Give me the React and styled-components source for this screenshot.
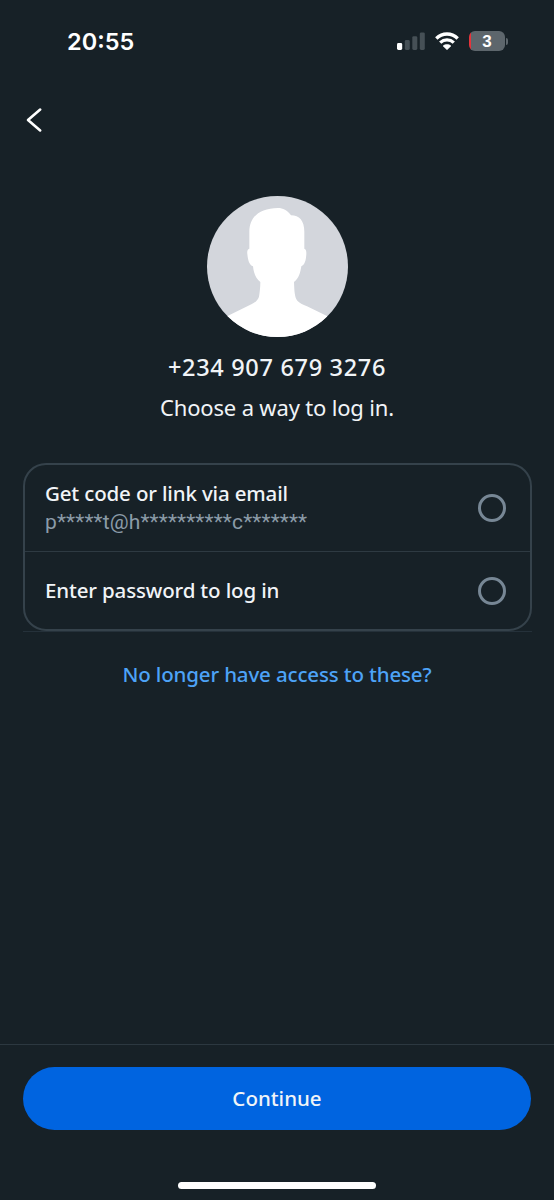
import React from 'react'
import styled, { createGlobalStyle } from 'styled-components'

const options = [
  { title: 'Get code or link via email', detail: 'p*****t@h**********c*******', height: 86 },
  { title: 'Enter password to log in', height: 78 },
]

export default function App() {
  return (
    <Screen>
      <GlobalStyle />
      <StatusBar>
        <Time>20:55</Time>
        <StatusIcons>
          <SignalIcon />
          <WifiIcon />
          <Battery>
            <BatteryBody>3</BatteryBody>
            <BatteryTip />
          </Battery>
        </StatusIcons>
      </StatusBar>
      <NavBar>
        <BackButton aria-label="Back">
          <svg width="18" height="26" viewBox="0 0 18 26" fill="none">
            <path d="M15.2 2.6 3 13l12.2 10.4" stroke="#fff" strokeWidth="2.6" strokeLinecap="round" strokeLinejoin="round" />
          </svg>
        </BackButton>
      </NavBar>
      <Profile>
        <Avatar />
        <Phone>+234 907 679 3276</Phone>
        <Prompt>Choose a way to log in.</Prompt>
      </Profile>
      <Options>
        <OptionCard>
          {options.map(option => (
            <Option key={ option.title } $height={ option.height }>
              <OptionText>
                <OptionTitle>{ option.title }</OptionTitle>
                {option.detail && <OptionDetail>{ option.detail }</OptionDetail>}
              </OptionText>
              <Radio />
            </Option>
          ))}
        </OptionCard>
      </Options>
      <HelpLink>No longer have access to these?</HelpLink>
      <Footer>
        <ContinueButton>Continue</ContinueButton>
        <HomeIndicator />
      </Footer>
    </Screen>
  )
}

const SignalIcon = () => (
  <svg width="28" height="18" viewBox="0 0 28 18">
    <rect x="0" y="11" width="5.2" height="7" rx="1.4" fill="#fff" />
    <rect x="7.8" y="8" width="5" height="10" rx="1.4" fill="#465056" />
    <rect x="15.3" y="4.2" width="5" height="13.8" rx="1.4" fill="#465056" />
    <rect x="22.8" y="0.4" width="5" height="17.6" rx="1.4" fill="#465056" />
  </svg>
)

const WifiIcon = () => (
  <svg width="24" height="18" viewBox="0 0 24 18">
    <path d="M1.3 6.4C7.4.6 16.6.6 22.7 6.4" fill="none" stroke="#fff" strokeWidth="3.4" />
    <path d="M5.2 10.6c3.9-3.6 9.7-3.6 13.6 0" fill="none" stroke="#fff" strokeWidth="3.3" />
    <path d="M12 17.8 8 13.9c2.3-1.9 5.7-1.9 8 0z" fill="#fff" stroke="#fff" strokeWidth="0.5" strokeLinejoin="round" />
  </svg>
)

const Avatar = () => (
  <AvatarCircle>
    <svg width="141" height="141" viewBox="0 0 423 423">
      <path
        fill="#fff"
        d="M127 158V108C127 62 158 37 213 36C228 36 241 42 252 58C277 58 292 74 292 108V158C298 160 298 166 298 174C297 194 293 206 283 211C280 230 276 247 261 258C262 286 263 304 271 314C277 321 287 325 300 331L360 360V423H60V361L127 328C143 321 151 315 156 302C158 290 160 274 160 258C147 247 140 232 138 211C127 207 123 194 121 174C120 166 121 160 127 158Z"
      />
    </svg>
  </AvatarCircle>
)

const GlobalStyle = createGlobalStyle`
  * {
    box-sizing: border-box;
  }

  body {
    margin: 0;
    background: #172127;
  }
`

const Screen = styled.div`
  display: flex;
  flex-direction: column;
  width: 554px;
  height: 1200px;
  overflow: hidden;
  background: #172127;
  color: #f1f4f7;
  font-family: 'Noto Sans', sans-serif;
`

const StatusBar = styled.div`
  display: flex;
  justify-content: space-between;
  align-items: center;
  height: 82px;
  padding: 0 46px 0 67px;
`

const Time = styled.span`
  padding-top: 2px;
  color: #fff;
  font-family: Inter, sans-serif;
  font-size: 23.5px;
  font-weight: 600;
  line-height: 30px;
`

const StatusIcons = styled.div`
  display: flex;
  align-items: center;
  gap: 10px;
`

const Battery = styled.div`
  display: flex;
  align-items: center;
  gap: 1px;
`

const BatteryBody = styled.div`
  width: 36px;
  height: 20px;
  border-radius: 6px;
  background: linear-gradient(to right, #e5343b 1.5px, #5d666c 2px);
  color: #fff;
  font-family: 'Liberation Sans', sans-serif;
  font-size: 17px;
  font-weight: 700;
  line-height: 21px;
  text-align: center;
`

const BatteryTip = styled.div`
  width: 2px;
  height: 7px;
  border-radius: 0 2px 2px 0;
  background: #5d666c;
`

const NavBar = styled.div`
  display: flex;
  align-items: center;
  height: 75px;
  padding: 0 25px;
`

const BackButton = styled.button`
  display: flex;
  padding: 0;
  border: 0;
  background: none;
`

const Profile = styled.div`
  display: flex;
  flex-direction: column;
  align-items: center;
  height: 306px;
  padding-top: 38.5px;
`

const AvatarCircle = styled.div`
  width: 141px;
  height: 141px;
  border-radius: 50%;
  background: #d3d6dc;
  overflow: hidden;
`

const Phone = styled.h1`
  margin: 14px 0 0;
  font-size: 23.5px;
  font-weight: 500;
  letter-spacing: 0.68px;
  line-height: 32px;
  white-space: nowrap;
`

const Prompt = styled.p`
  margin: 9px 0 0;
  font-size: 22px;
  letter-spacing: -0.17px;
  line-height: 30px;
  white-space: nowrap;
`

const Options = styled.div`
  margin: 0 22px 0 23px;
  border-bottom: 1px solid #25313a;
`

const OptionCard = styled.div`
  border: 2px solid #35424b;
  border-radius: 23px;
`

const Option = styled.div`
  display: flex;
  justify-content: space-between;
  align-items: center;
  height: ${ props => props.$height }px;
  padding: 0 24px 0 20px;

  & + & {
    border-top: 1px solid #2e3a42;
  }
`

const OptionText = styled.div`
  display: flex;
  flex-direction: column;
`

const OptionTitle = styled.span`
  font-size: 20.5px;
  font-weight: 500;
  letter-spacing: -0.15px;
  line-height: 29px;
  white-space: nowrap;
`

const OptionDetail = styled.span`
  color: #8b9ba7;
  font-family: Roboto, sans-serif;
  font-size: 21px;
  letter-spacing: 0.12px;
  line-height: 29px;
  white-space: nowrap;
`

const Radio = styled.div`
  width: 28px;
  height: 28px;
  border: 3px solid #778795;
  border-radius: 50%;
`

const HelpLink = styled.a`
  margin-top: 27px;
  color: #4da3f7;
  font-size: 20.5px;
  font-weight: 500;
  letter-spacing: -0.15px;
  line-height: 30px;
  text-align: center;
`

const Footer = styled.div`
  display: flex;
  flex-direction: column;
  align-items: center;
  height: 156px;
  margin-top: auto;
  padding: 22px 23px 0;
  border-top: 1px solid #2c3840;
`

const ContinueButton = styled.button`
  width: 100%;
  height: 63px;
  padding: 0 0 2px;
  border: 0;
  border-radius: 32px;
  background: #0064e0;
  color: #f1f4f7;
  font-family: inherit;
  font-size: 20.5px;
  font-weight: 500;
`

const HomeIndicator = styled.div`
  width: 198px;
  height: 7px;
  margin-top: 51.5px;
  border-radius: 4px;
  background: #fff;
`
